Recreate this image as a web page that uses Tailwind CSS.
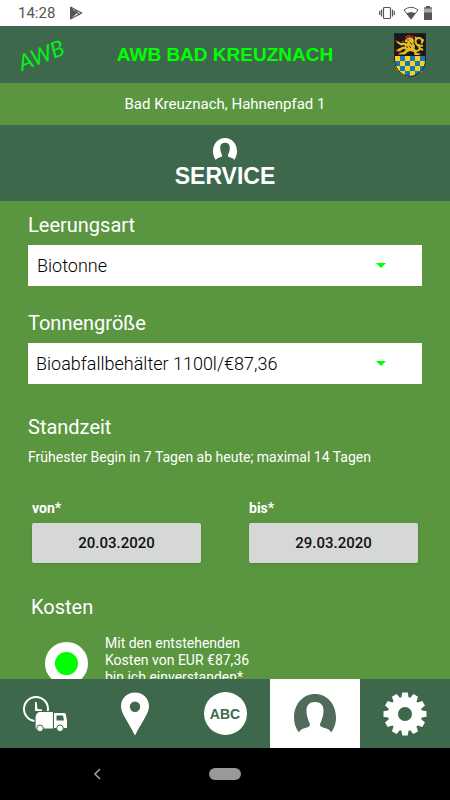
<!DOCTYPE html>
<html lang="de">
<head>
    <meta charset="UTF-8">
    <meta name="viewport" content="width=device-width, initial-scale=1.0">
    <title>AWB Bad Kreuznach - Service</title>
    <script src="https://cdn.jsdelivr.net/npm/@tailwindcss/browser@4"></script>
</head>
<body class="flex h-screen flex-col overflow-hidden bg-[#5a963f] font-['Roboto',sans-serif] text-white">
    <!-- Shared shapes -->
    <svg class="hidden">
        <symbol id="person" viewBox="0 0 42 40">
            <path fill="currentColor" d="M5 38.5C2 35 0 29.500 0 23.500C0 10 9 0 21 0S42 10 42 23.500C42 29.500 40 35 37 38.500C36 36 34 35 31.500 34.300C28 33.300 26 32.500 26 31C26 29 29.500 24 29.500 16.500C29.500 11 26.500 8 21 8S12.500 11 12.500 16.500C12.500 24 16 29 16 31C16 32.500 14 33.300 10.500 34.300C8 35 6 36 5 38.500Z"/>
        </symbol>
    </svg>

    <!-- Status bar -->
    <div class="flex h-[26px] shrink-0 items-center bg-white px-[18px] text-[#555]">
        <span class="text-[15px] leading-5">14:28</span>
        <svg class="ml-3.5 h-3.5 w-3.5" viewBox="0 0 14 14">
            <path fill="#555" d="M1 0.500L8 7L1 13.500Z"/>
            <path fill="none" stroke="#555" stroke-width="1.300" d="M1.500 1L12.500 7L1.500 13M6 4.500L10.500 9"/>
        </svg>
        <div class="ml-auto flex items-center">
            <svg class="h-3.5 w-4" viewBox="0 0 16 14" fill="none" stroke="#555">
                <rect x="4.500" y="1.500" width="7" height="11" rx="1" stroke-width="1.200"/>
                <path stroke-width="1.200" d="M2.500 3.500V10.500M.7 5V9M13.500 3.500V10.500M15.300 5V9"/>
            </svg>
            <svg class="ml-2 h-3.5 w-4" viewBox="0 0 16 14">
                <path fill="none" stroke="#555" d="M8 13L1 4Q8 -1.500 15 4Z"/>
                <path fill="#555" d="M8 13.500L3.500 7.500Q8 4.500 12.500 7.500Z"/>
            </svg>
            <svg class="ml-[5px] h-3.5 w-2" viewBox="0 0 8 14">
                <path fill="#aaa" d="M0 1.500H2V0H6V1.500H8V14H0Z"/>
                <path fill="#555" d="M0 6.500H8V14H0ZM0 1.500H2V0H6V1.500H8V2.500H0Z"/>
            </svg>
        </div>
    </div>

    <!-- App header -->
    <header class="grid h-[57px] shrink-0 grid-cols-[56px_1fr_56px] items-center bg-[#3e684c] px-3">
        <svg class="h-12 w-14 overflow-visible" viewBox="0 0 56 48" role="img" aria-label="AWB">
            <text x="10" y="40" transform="rotate(-21 10 40)" fill="#00f51a" font-family="Lato" font-style="italic" font-weight="400" font-size="22">AWB</text>
        </svg>
        <h1 class="text-center font-['Liberation_Sans',sans-serif] text-[19px] leading-6 font-bold text-[#00ff00]">AWB BAD KREUZNACH</h1>
        <!-- Coat of arms -->
        <svg class="h-11 w-8 justify-self-center" viewBox="0 0 32 44">
            <defs>
                <clipPath id="shield"><path d="M0 0H32V27C32 37 25 43 16 44C7 43 0 37 0 27Z"/></clipPath>
                <pattern id="checks" x="1" y="23" width="10" height="10" patternUnits="userSpaceOnUse">
                    <rect width="10" height="10" fill="#f5d51b"/>
                    <path fill="#1874bd" d="M5 0H10V5H5ZM0 5H5V10H0Z"/>
                </pattern>
            </defs>
            <g clip-path="url(#shield)">
                <rect width="32" height="23" fill="#17171a"/>
                <rect y="23" width="32" height="21" fill="url(#checks)"/>
                <path fill="#e3bb22" d="M11 7L14 4.500H18L20 7L19.500 10L21 13L20.500 16L23 17.500L22.500 20L26 20.500V22H20.500L20 19L16 18L13 19.500L11 21.500H5V20L9.500 19L12 16.500L9 16L6 18.500L3 18V16.500L8 14L11 13.500L10.500 12L7 12.500L2.500 9.500L3.500 8L7 10L10 9.500L12 10.500L14 9.500L11 9Z"/>
                <path fill="none" stroke="#e3bb22" stroke-width="2" d="M20 17.500C26 19 27 15 24 12.500C20 9.500 21 5 25 5C28 5 29 8 27.500 10.500M23 6L21 4M24 12L29 13M25 15L29 17M27 8L30 7"/>
                <path fill="none" stroke="#17171a" stroke-width=".8" d="M13 7H15M16 9L18 12M15 13L17 15M12 13L14 15"/>
                <path fill="none" stroke="#d51f2b" stroke-width="1.500" d="M12 5L12 3M14 4.500V2M16 4V2M18 5L19 2.500M8 8L10 9M2 7L3 9M2 17L4 19M4 21H6M25 21H27"/>
            </g>
            <path fill="none" stroke="#222" d="M.5 .5H31.500V27C31.500 36 25 42.500 16 43.500C7 42.500 .5 36 .5 27Z"/>
        </svg>
    </header>

    <p class="shrink-0 py-[11px] text-center text-[15px] leading-5">Bad Kreuznach, Hahnenpfad 1</p>

    <div class="flex h-[76px] shrink-0 flex-col items-center bg-[#3e684c] pt-[13px]">
        <svg class="h-[23px] w-6"><use href="#person"/></svg>
        <h2 class="mt-px font-['Liberation_Sans',sans-serif] text-[23px] leading-7 font-bold">SERVICE</h2>
    </div>

    <!-- Order form -->
    <main class="min-h-0 flex-1 overflow-y-auto px-7 pt-2 [scrollbar-width:none]">
        <form>
            <label for="leerungsart" class="block text-xl leading-8">Leerungsart</label>
            <div class="relative mt-1">
                <select id="leerungsart" class="block h-[41px] w-full appearance-none bg-white pr-14 pl-[9px] text-lg leading-6 font-light text-black">
                    <option>Biotonne</option>
                </select>
                <svg class="pointer-events-none absolute top-[18px] right-9 h-[5px] w-2.5" viewBox="0 0 10 5"><path fill="#00ff00" d="M0 0H10L5 5Z"/></svg>
            </div>

            <label for="tonne" class="mt-[21px] block text-xl leading-8">Tonnengröße</label>
            <div class="relative mt-1">
                <select id="tonne" class="block h-[41px] w-full appearance-none bg-white pr-14 pl-2 text-lg leading-6 font-light text-black">
                    <option>Bioabfallbehälter 1100l/€87,36</option>
                </select>
                <svg class="pointer-events-none absolute top-[18px] right-9 h-[5px] w-2.5" viewBox="0 0 10 5"><path fill="#00ff00" d="M0 0H10L5 5Z"/></svg>
            </div>

            <h3 class="mt-[27px] text-xl leading-8">Standzeit</h3>
            <p class="mt-1 text-sm leading-5">Frühester Begin in 7 Tagen ab heute; maximal 14 Tagen</p>

            <div class="mt-[31px] grid grid-cols-2 gap-12 px-1">
                <div>
                    <label for="von" class="block text-sm leading-5 font-bold">von*</label>
                    <button id="von" type="button" class="mt-[5px] h-10 w-full rounded-xs bg-[#d6d7d7] text-[15px] font-medium text-[#111] shadow-sm">20.03.2020</button>
                </div>
                <div>
                    <label for="bis" class="block text-sm leading-5 font-bold">bis*</label>
                    <button id="bis" type="button" class="mt-[5px] h-10 w-full rounded-xs bg-[#d6d7d7] text-[15px] font-medium text-[#111] shadow-sm">29.03.2020</button>
                </div>
            </div>

            <h3 class="mt-7 pl-[3px] text-xl leading-8">Kosten</h3>
            <div class="mt-3 flex pl-[17px]">
                <input id="kosten" type="radio" checked class="mt-[7px] h-[43px] w-[43px] shrink-0 appearance-none rounded-full border-[10px] border-white bg-[#00ff00] bg-clip-padding">
                <label for="kosten" class="ml-[17px] w-40 text-sm leading-[17px]">Mit den entstehenden Kosten von EUR €87,36 bin ich einverstanden*</label>
            </div>
        </form>
    </main>

    <!-- Tab bar -->
    <nav class="grid h-[69px] shrink-0 grid-cols-5 bg-[#3e684c]">
        <a href="#" aria-label="Termine" class="flex items-center justify-center">
            <svg class="h-9 w-11" viewBox="0 0 44 36">
                <circle cx="13" cy="13" r="12" fill="none" stroke="#fff" stroke-width="2"/>
                <path fill="#fff" stroke="#3e684c" stroke-width="1.200" d="M16 15.500H30.500V33H12V21Q12.500 16.500 16 15.500Z"/>
                <path fill="#fff" d="M12 6H13.500L14.500 13L19 13.500V15H12ZM31 17H41Q43 17 43 19L44 25V32H31Z"/>
                <path fill="#3e684c" d="M33.500 19.500H40L41 24.500H33.500Z"/>
                <g fill="#fff" stroke="#3e684c" stroke-width="1"><circle cx="17" cy="32.300" r="3.300"/><circle cx="37" cy="32.300" r="3.300"/></g>
            </svg>
        </a>
        <a href="#" aria-label="Standorte" class="flex items-center justify-center">
            <svg class="h-11 w-7" viewBox="0 0 28 44"><path fill="#fff" fill-rule="evenodd" d="M14 .5C6 .5 0 6.500 0 14C0 22 7 29 14 43.500C21 29 28 22 28 14C28 6.500 22 .5 14 .5ZM14 9.500A5.200 5.200 0 1 1 14 19.900A5.200 5.200 0 1 1 14 9.500Z"/></svg>
        </a>
        <a href="#" aria-label="Abfall ABC" class="flex items-center justify-center">
            <span class="flex size-[43px] items-center justify-center rounded-full bg-white font-['Liberation_Sans',sans-serif] text-sm leading-5 font-bold text-[#3e684c]">ABC</span>
        </a>
        <a href="#" aria-label="Service" aria-current="page" class="flex items-center justify-center bg-white text-[#506b5a]">
            <svg class="h-10 w-[42px]"><use href="#person"/></svg>
        </a>
        <a href="#" aria-label="Einstellungen" class="flex items-center justify-center">
            <svg class="size-11" viewBox="-22 -22 44 44" fill="#fff">
                <circle r="12" fill="none" stroke="#fff" stroke-width="10"/>
                <g id="teeth">
                    <path id="t" d="M-3.700 -16L-2.700 -21.500H2.700L3.700 -16Z"/>
                    <use href="#t" transform="rotate(30)"/>
                    <use href="#t" transform="rotate(60)"/>
                </g>
                <use href="#teeth" transform="rotate(90)"/>
                <use href="#teeth" transform="rotate(180)"/>
                <use href="#teeth" transform="rotate(270)"/>
            </svg>
        </a>
    </nav>

    <!-- Android navigation -->
    <div class="grid h-[52px] shrink-0 grid-cols-[1fr_auto_1fr] items-center bg-black">
        <button type="button" aria-label="Zurück" class="mr-4 justify-self-center">
            <svg class="h-3 w-2" viewBox="0 0 8 12"><path fill="none" stroke="#999" stroke-width="1.700" d="M7 1L2 6L7 11"/></svg>
        </button>
        <button type="button" aria-label="Startseite" class="h-3 w-8 rounded-full bg-[#999]"></button>
    </div>
</body>
</html>
